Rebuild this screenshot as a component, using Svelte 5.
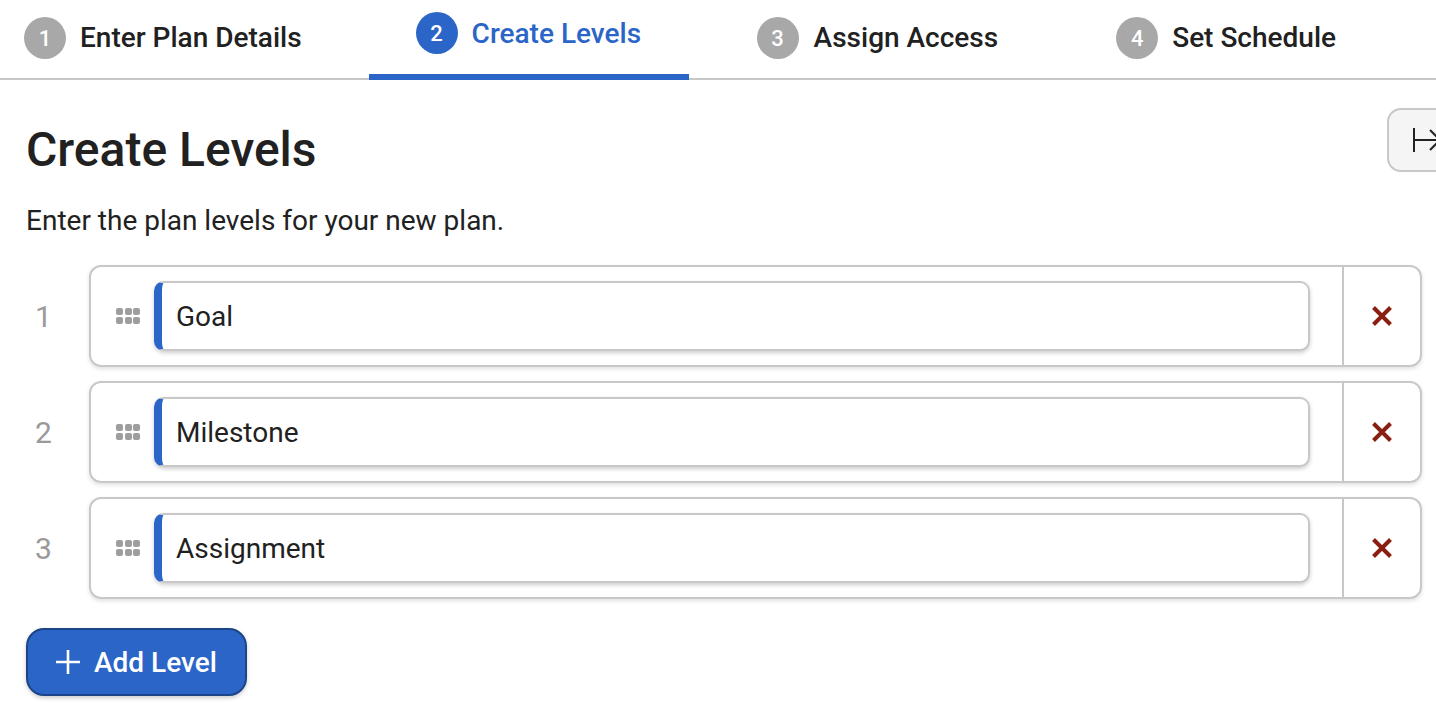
<script>
  const steps = [
    { n: 1, label: 'Enter Plan Details' },
    { n: 2, label: 'Create Levels', active: true },
    { n: 3, label: 'Assign Access' },
    { n: 4, label: 'Set Schedule' },
  ];
  let levels = $state(['Goal', 'Milestone', 'Assignment']);
</script>

<div class="page">
  <nav class="steps">
    {#each steps as step}
      <div class="step" class:active={step.active}>
        <span class="badge">{step.n}</span>
        <span class="label">{step.label}</span>
      </div>
    {/each}
  </nav>

  <button class="collapse" aria-label="Collapse">
    <svg width="34" height="26" viewBox="0 0 34 26" fill="none" stroke="#222" stroke-width="2">
      <path d="M1 1v24M1 13h26M17 3l10 10-10 10" />
    </svg>
  </button>

  <main class="content">
    <h1>Create Levels</h1>
    <p>Enter the plan levels for your new plan.</p>

    <div class="levels">
      {#each levels as level, i}
        <div class="row">
          <span class="num">{i + 1}</span>
          <div class="card">
            <div class="field-wrap">
              <span class="grip">
                {#each Array(6) as _}<i></i>{/each}
              </span>
              <input class="field" value={level} aria-label="Level {i + 1}" />
            </div>
            <button class="remove" aria-label="Remove level">
              <svg width="22" height="22" viewBox="0 0 22 22" stroke="#8a1f11" stroke-width="4" fill="none">
                <path d="M2.5 2.5l17 17M19.5 2.5l-17 17" />
              </svg>
            </button>
          </div>
        </div>
      {/each}
    </div>

    <button class="add">
      <svg width="26" height="26" viewBox="0 0 26 26" stroke="#fff" stroke-width="2.6" fill="none">
        <path d="M13 1v24M1 13h24" />
      </svg>
      Add Level
    </button>
  </main>
</div>

<style>
  :global(body) {
    margin: 0;
    background: #fff;
    font-family: Roboto, "Liberation Sans", sans-serif;
    color: #212121;
  }

  .page {
    position: relative;
    width: 1436px;
    height: 714px;
    overflow: hidden;
  }

  .steps {
    display: flex;
    gap: 21px;
    height: 78px;
    border-bottom: 2px solid #c8c8c8;
  }

  .step {
    display: flex;
    align-items: center;
    gap: 14px;
    height: 78px;
    padding: 0 47px 2px;
    box-sizing: border-box;
    font-size: 28px;
    font-weight: 500;
  }

  .step:first-child {
    padding-left: 24px;
    padding-right: 46px;
  }

  .step:nth-child(3) {
    gap: 15px;
  }

  .step:last-child {
    margin-left: 3px;
  }

  .label {
    margin-top: -2px;
  }

  .badge {
    display: flex;
    align-items: center;
    justify-content: center;
    width: 42px;
    height: 42px;
    border-radius: 50%;
    background: #a8a8a8;
    color: #fff;
    font-size: 22px;
  }

  .step.active {
    width: 320px;
    height: 80px;
    padding-bottom: 8px;
    border-bottom: 6px solid #2b65c8;
    color: #2b65c8;
  }

  .step.active .label {
    margin-top: 0;
  }

  .step.active .badge {
    background: #2b65c8;
  }

  .collapse {
    position: absolute;
    left: 1387px;
    top: 108px;
    display: flex;
    align-items: center;
    width: 80px;
    height: 64px;
    padding: 0 0 0 24px;
    background: #f5f5f5;
    border: 2px solid #c8c8c8;
    border-radius: 14px;
  }

  .content {
    padding: 0 14px 0 26px;
  }

  h1 {
    margin: 40px 0 0;
    font-size: 48px;
    line-height: 60px;
    font-weight: 500;
  }

  p {
    margin: 23px 0 0;
    font-size: 28px;
    line-height: 36px;
  }

  .levels {
    display: flex;
    flex-direction: column;
    gap: 14px;
    margin-top: 26px;
  }

  .row {
    display: flex;
    align-items: center;
  }

  .num {
    width: 63px;
    padding-left: 9px;
    box-sizing: border-box;
    font-size: 30px;
    color: #9a9a9a;
  }

  .card {
    flex: 1;
    display: flex;
    height: 102px;
    box-sizing: border-box;
    border: 2px solid #c8c8c8;
    border-radius: 12px;
    box-shadow: 0 2px 4px rgba(0, 0, 0, 0.12);
  }

  .field-wrap {
    flex: 1;
    display: flex;
    align-items: center;
    padding: 0 32px 0 24px;
    border-right: 2px solid #c8c8c8;
  }

  .grip {
    display: grid;
    grid-template-columns: repeat(3, 7px);
    gap: 1.5px;
    margin: 0 14px 0 1px;
  }

  .grip i {
    width: 7px;
    height: 7px;
    border-radius: 2px;
    background: #9e9e9e;
  }

  .field {
    flex: 1;
    min-width: 0;
    height: 70px;
    box-sizing: border-box;
    padding: 0 0 0 14px;
    font: 400 28px Roboto, "Liberation Sans", sans-serif;
    color: #212121;
    border: 2px solid #c8c8c8;
    border-left: 8px solid #2b65c8;
    border-radius: 10px;
    box-shadow: 0 2px 4px rgba(0, 0, 0, 0.2);
    outline: none;
  }

  .remove {
    display: flex;
    align-items: center;
    justify-content: center;
    width: 76px;
    padding: 0;
    background: none;
    border: none;
  }

  .add {
    display: flex;
    align-items: center;
    gap: 13px;
    width: 221px;
    height: 68px;
    margin-top: 29px;
    padding: 0 0 0 27px;
    box-sizing: border-box;
    background: #2b65c8;
    color: #fff;
    font: 500 28px Roboto, "Liberation Sans", sans-serif;
    border: 2px solid #1c4587;
    border-radius: 18px;
    box-shadow: 0 2px 4px rgba(0, 0, 0, 0.2);
  }
</style>
